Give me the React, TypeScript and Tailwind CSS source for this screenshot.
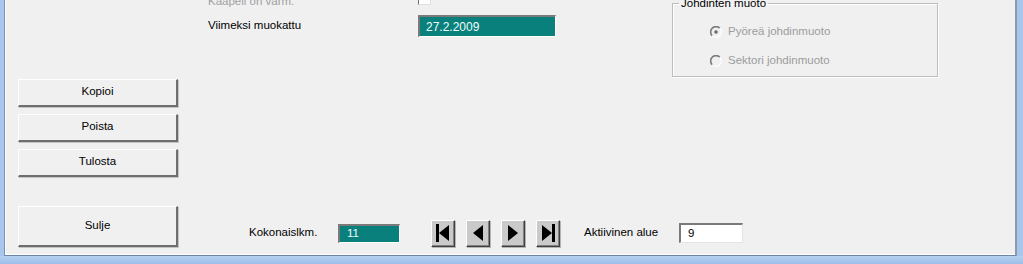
import React from "react";

function RaisedButton({ label, tall }: { label: string; tall?: boolean }) {
  return (
    <div
      className={`${tall ? "h-[41px]" : "h-[28px]"} w-[160px] flex items-center justify-center bg-[#f0f0f0] border-t border-l border-t-white border-l-white border-r-2 border-b-2 border-r-[#6e6e6e] border-b-[#6e6e6e] shadow-[1px_1px_0_#c4c4c4] text-[11.5px] text-black`}
    >
      <span className="-mt-[1px]">{label}</span>
    </div>
  );
}

function NavButton({ kind }: { kind: "first" | "prev" | "next" | "last" }) {
  return (
    <div className="w-[24px] h-[27px] flex items-center justify-center bg-[#cacaca] border-t border-l border-t-white border-l-white border-r border-b border-r-[#404040] border-b-[#404040] shadow-[inset_-1px_-1px_0_#808080,1px_1px_0_#b4b4b4]">
      <svg width="14" height="18" viewBox="0 0 14 18">
        {kind === "first" && (
          <>
            <rect x="0" y="0" width="3" height="18" fill="#000" />
            <polygon points="3,9 13,1 13,17" fill="#000" />
          </>
        )}
        {kind === "prev" && <polygon points="2,9 12,1 12,17" fill="#000" />}
        {kind === "next" && <polygon points="2,1 12,9 2,17" fill="#000" />}
        {kind === "last" && (
          <>
            <polygon points="1,1 11,9 1,17" fill="#000" />
            <rect x="11" y="0" width="3" height="18" fill="#000" />
          </>
        )}
      </svg>
    </div>
  );
}

function Radio({ checked, label }: { checked?: boolean; label: string }) {
  return (
    <div className="h-[16px] flex items-center gap-[6px]">
      <svg width="12" height="12" viewBox="0 0 12 12">
        <circle cx="6" cy="6" r="5.5" fill="#f0f0f0" />
        <path d="M2.2 9.8 A5.3 5.3 0 0 1 9.8 2.2" stroke="#7a7a7a" strokeWidth="1.6" fill="none" />
        <path d="M9.8 2.2 A5.3 5.3 0 0 1 2.2 9.8" stroke="#ffffff" strokeWidth="1.2" fill="none" />
        {checked && <circle cx="6" cy="6" r="1.8" fill="#6a6a6a" />}
      </svg>
      <span className="text-[11.5px] text-[#9c9c9c]">{label}</span>
    </div>
  );
}

export default function App() {
  return (
    <div className="w-[1023px] h-[264px] flex flex-col overflow-hidden bg-[#a9c6ec] font-['Liberation_Sans',Arial,sans-serif]">
      <div className="flex-1 min-h-0 flex pl-[4px] pr-[6px]">
        <div className="flex-1 flex bg-[#f0f0f0] border-l border-r-2 border-b border-l-[#7d92b3] border-r-[#8d9aab] border-b-[#6f84a6] shadow-[inset_1px_0_0_#ffffff,inset_0_-1px_0_#ffffff]">
          {/* left buttons */}
          <div className="w-[160px] ml-[13px] flex flex-col pt-[79px]">
            <RaisedButton label="Kopioi" />
            <div className="mt-[7px]">
              <RaisedButton label="Poista" />
            </div>
            <div className="mt-[7px]">
              <RaisedButton label="Tulosta" />
            </div>
            <div className="mt-[29px]">
              <RaisedButton label="Sulje" tall />
            </div>
          </div>

          {/* right area */}
          <div className="ml-[30px] flex-1 flex flex-col">
            <div className="flex">
              <div className="w-[464px] flex flex-col">
                <div className="h-[20px] -mt-[8px] flex items-center">
                  <span className="w-[210px] text-[11.5px] text-[#a0a0a0]">Kaapeli on varm.</span>
                  <div className="-mt-[7px] w-[13px] h-[13px] bg-white border-t border-l border-t-[#707070] border-l-[#707070] border-r border-b border-r-[#e0e0e0] border-b-[#e0e0e0]" />
                </div>
                <div className="h-[22px] mt-[3px] flex items-center">
                  <span className="w-[210px] text-[11.5px] text-black">Viimeksi muokattu</span>
                  <div className="w-[138px] h-[22px] flex items-center pl-[6px] bg-[#0a807d] border-t-2 border-l-2 border-t-[#7a7a7a] border-l-[#7a7a7a] border-r border-b border-r-white border-b-white text-[12px] text-[#eefcfb]">
                    27.2.2009
                  </div>
                </div>
              </div>
              <fieldset className="w-[266px] h-[81px] -mt-[4px] border border-[#bcbcbc] pl-[6px] shadow-[inset_1px_1px_0_#ffffff,1px_1px_0_#ffffff]">
                <legend className="px-[2px] text-[11.5px] leading-[14px] text-black">Johdinten muoto</legend>
                <div className="pl-[31px] pt-[14px] flex flex-col gap-[13px]">
                  <Radio checked label="Pyöreä johdinmuoto" />
                  <Radio label="Sektori johdinmuoto" />
                </div>
              </fieldset>
            </div>

            <div className="mt-auto mb-[7px] h-[30px] flex items-center pl-[41px]">
              <span className="w-[89px] text-[11.5px] text-black">Kokonaislkm.</span>
              <div className="w-[62px] h-[19px] flex items-center pl-[7px] bg-[#0a807d] border-t-2 border-l-2 border-t-[#7a7a7a] border-l-[#7a7a7a] border-r border-b border-r-white border-b-white text-[11.5px] text-[#eefcfb]">
                11
              </div>
              <div className="ml-[31px] flex gap-[11px]">
                <NavButton kind="first" />
                <NavButton kind="prev" />
                <NavButton kind="next" />
                <NavButton kind="last" />
              </div>
              <span className="ml-[24px] w-[95px] text-[11.5px] text-black">Aktiivinen alue</span>
              <div className="w-[64px] h-[20px] flex items-center pl-[7px] bg-white border-t-2 border-l-2 border-t-[#7a7a7a] border-l-[#7a7a7a] border-r border-b border-r-[#e4e4e4] border-b-[#e4e4e4] text-[11.5px] text-black">
                9
              </div>
            </div>
          </div>
        </div>
      </div>
      <div className="h-[8px] bg-gradient-to-b from-[#b5cff0] to-[#9ebfe8]" />
    </div>
  );
}
